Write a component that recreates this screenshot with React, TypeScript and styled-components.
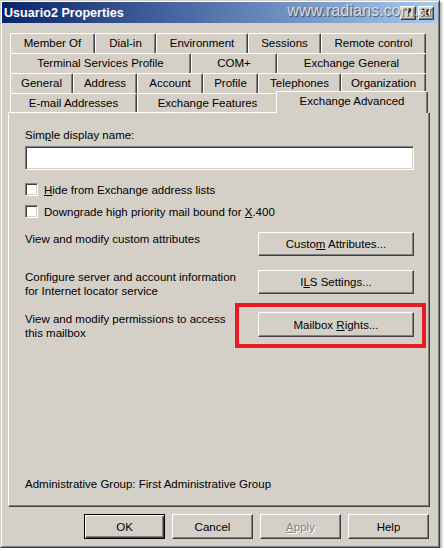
import React from 'react';
import styled, { createGlobalStyle } from 'styled-components';

const face = '#D4D0C8';
const shade = '#808080';
const dark = '#404040';

const GlobalStyle = createGlobalStyle`
	html, body {
		margin: 0;
		padding: 0;
		background: #fff;
	}
	body {
		font-family: 'Liberation Sans', Arial, sans-serif;
		font-size: 11.5px;
		line-height: 14px;
		color: #000;
	}
`;

const Window = styled.div`
	position: relative;
	box-sizing: border-box;
	width: 440px;
	height: 548px;
	background: ${face};
	border: 1px solid;
	border-color: ${face} ${dark} ${dark} ${face};
	box-shadow: 2px 2px 2px rgba(0, 0, 0, 0.3);
`;

const Frame = styled.div`
	box-sizing: border-box;
	height: 100%;
	border: 1px solid;
	border-color: #fff ${shade} ${shade} #fff;
	display: flex;
	flex-direction: column;
`;

const TitleBar = styled.div`
	height: 21px;
	display: flex;
	align-items: center;
	padding: 0 4px 0 2px;
	background: linear-gradient(to right, #0a246a, #a6caf0);
`;

const Title = styled.span`
	flex: 1;
	color: #fff;
	font-weight: bold;
	font-size: 12.6px;
	white-space: nowrap;
`;

const CaptionButtons = styled.div`
	display: flex;
	gap: 2px;
`;

const CaptionButton = styled.div`
	box-sizing: border-box;
	width: 16px;
	height: 14px;
	background: ${face};
	border: 1px solid;
	border-color: #fff ${dark} ${dark} #fff;
	box-shadow: inset -1px -1px 0 ${shade};
	display: flex;
	align-items: center;
	justify-content: center;
	font-weight: bold;
	font-size: 11px;
	line-height: 11px;
`;

const Watermark = styled.div`
	position: absolute;
	top: 1px;
	right: 6px;
	font-family: 'Liberation Sans', Arial, sans-serif;
	font-size: 16.2px;
	line-height: 16px;
	color: rgba(232, 232, 232, 0.9);
	text-shadow: 1px 1px 1px rgba(0, 0, 0, 0.55);
	pointer-events: none;
	white-space: nowrap;
`;

const Body = styled.div`
	flex: 1;
	display: flex;
	flex-direction: column;
	padding: 10px 8px 0 6px;
`;

const TabStrip = styled.div`
	display: flex;
	flex-direction: column;
	padding-left: 2px;
`;

const TabRow = styled.div`
	display: flex;
	height: 20px;
`;

const Tab = styled.div<{ $w: number; $selected?: boolean }>`
	box-sizing: border-box;
	width: ${(p) => p.$w + (p.$selected ? 4 : 0)}px;
	height: ${(p) => (p.$selected ? 22 : 20)}px;
	margin: ${(p) => (p.$selected ? '-2px 0 0 -2px' : '0')};
	position: ${(p) => (p.$selected ? 'relative' : 'static')};
	z-index: ${(p) => (p.$selected ? 2 : 'auto')};
	background: ${face};
	border-top: 1px solid #fff;
	border-left: 1px solid #fff;
	border-right: 1px solid ${dark};
	box-shadow: inset -1px 0 0 ${shade};
	border-radius: 2px 2px 0 0;
	display: flex;
	align-items: center;
	justify-content: center;
	padding-bottom: ${(p) => (p.$selected ? 3 : 1)}px;
	white-space: nowrap;
`;

const Panel = styled.div`
	position: relative;
	box-sizing: border-box;
	width: 422px;
	height: 395px;
	margin-top: -1px;
	border: 1px solid;
	border-color: #fff ${dark} ${dark} #fff;
	box-shadow: inset -1px -1px 0 ${shade};
	padding: 15px 16px 15px 16px;
	display: flex;
	flex-direction: column;
`;

const Label = styled.div`
	white-space: nowrap;
`;

const Key = styled.span`
	text-decoration: underline;
	text-underline-offset: 1px;
`;

const TextBox = styled.div`
	box-sizing: border-box;
	width: 389px;
	height: 24px;
	margin-top: 4px;
	background: #fff;
	border: 1px solid;
	border-color: ${shade} #fff #fff ${shade};
	box-shadow: inset 1px 1px 0 ${dark}, inset -1px -1px 0 ${face};
`;

const CheckRow = styled.div<{ $gap: number }>`
	display: flex;
	align-items: center;
	height: 13px;
	margin-top: ${(p) => p.$gap}px;
	gap: 6px;
`;

const CheckBox = styled.div`
	box-sizing: border-box;
	width: 13px;
	height: 13px;
	background: #fff;
	border: 1px solid;
	border-color: ${shade} #fff #fff ${shade};
	box-shadow: inset 1px 1px 0 ${dark}, inset -1px -1px 0 ${face};
`;

const ActionRow = styled.div`
	display: grid;
	grid-template-columns: 233px 156px;
	align-items: start;
	margin-top: 14px;
`;

const ButtonSlot = styled.div`
	position: relative;
`;

const Button = styled.button<{ $w?: number; $h?: number; $default?: boolean; $disabled?: boolean }>`
	box-sizing: border-box;
	width: ${(p) => p.$w ?? 156}px;
	height: ${(p) => p.$h ?? 24}px;
	padding: 0;
	margin: 0;
	background: ${face};
	font: inherit;
	color: ${(p) => (p.$disabled ? shade : '#000')};
	text-shadow: ${(p) => (p.$disabled ? '1px 1px 0 #fff' : 'none')};
	border: 1px solid;
	border-color: ${(p) => (p.$default ? '#000' : `#fff ${dark} ${dark} #fff`)};
	box-shadow: ${(p) =>
		p.$default
			? `inset 1px 1px 0 #fff, inset -1px -1px 0 ${dark}, inset -2px -2px 0 ${shade}`
			: `inset -1px -1px 0 ${shade}`};
	text-align: center;
	white-space: nowrap;
`;

const Highlight = styled.div`
	position: absolute;
	top: -9px;
	left: -23px;
	right: -12px;
	bottom: -11px;
	border: 4px solid #e61c24;
	pointer-events: none;
`;

const Footer = styled.div`
	margin-top: auto;
	white-space: nowrap;
`;

const ButtonBar = styled.div`
	display: flex;
	justify-content: flex-end;
	gap: 7px;
	margin-top: 7px;
	padding-right: 1px;
`;

interface TabDef {
	label: string;
	w: number;
	selected?: boolean;
}

const tabRows: TabDef[][] = [
	[
		{ label: 'Member Of', w: 85 },
		{ label: 'Dial-in', w: 61 },
		{ label: 'Environment', w: 92 },
		{ label: 'Sessions', w: 73 },
		{ label: 'Remote control', w: 105 },
	],
	[
		{ label: 'Terminal Services Profile', w: 181 },
		{ label: 'COM+', w: 86 },
		{ label: 'Exchange General', w: 149 },
	],
	[
		{ label: 'General', w: 63 },
		{ label: 'Address', w: 64 },
		{ label: 'Account', w: 66 },
		{ label: 'Profile', w: 55 },
		{ label: 'Telephones', w: 83 },
		{ label: 'Organization', w: 85 },
	],
	[
		{ label: 'E-mail Addresses', w: 127 },
		{ label: 'Exchange Features', w: 141 },
		{ label: 'Exchange Advanced', w: 148, selected: true },
	],
];

const CloseGlyph = () => (
	<svg width="8" height="7" viewBox="0 0 8 7">
		<path d="M0 0h2l2 2 2-2h2L5 3.5 8 7H6L4 5 2 7H0l3-3.5z" fill="#000" />
	</svg>
);

export default function App() {
	return (
		<>
			<GlobalStyle />
			<Window>
				<Frame>
					<TitleBar>
						<Title>Usuario2 Properties</Title>
						<CaptionButtons>
							<CaptionButton>?</CaptionButton>
							<CaptionButton>
								<CloseGlyph />
							</CaptionButton>
						</CaptionButtons>
					</TitleBar>
					<Body>
						<TabStrip>
							{tabRows.map((row, i) => (
								<TabRow key={i}>
									{row.map((t) => (
										<Tab key={t.label} $w={t.w} $selected={t.selected}>
											{t.label}
										</Tab>
									))}
								</TabRow>
							))}
						</TabStrip>
						<Panel>
							<Label>
								Sim<Key>p</Key>le display name:
							</Label>
							<TextBox />
							<CheckRow $gap={13}>
								<CheckBox />
								<Label>
									<Key>H</Key>ide from Exchange address lists
								</Label>
							</CheckRow>
							<CheckRow $gap={9}>
								<CheckBox />
								<Label>
									Downgrade high priority mail bound for <Key>X</Key>.400
								</Label>
							</CheckRow>
							<ActionRow>
								<Label>View and modify custom attributes</Label>
								<ButtonSlot>
									<Button>
										Custo<Key>m</Key> Attributes...
									</Button>
								</ButtonSlot>
							</ActionRow>
							<ActionRow>
								<Label>
									Configure server and account information
									<br />
									for Internet locator service
								</Label>
								<ButtonSlot>
									<Button>
										I<Key>L</Key>S Settings...
									</Button>
								</ButtonSlot>
							</ActionRow>
							<ActionRow>
								<Label>
									View and modify permissions to access
									<br />
									this mailbox
								</Label>
								<ButtonSlot>
									<Button $h={25}>
										Mailbox <Key>R</Key>ights...
									</Button>
									<Highlight />
								</ButtonSlot>
							</ActionRow>
							<Footer>Administrative Group: First Administrative Group</Footer>
						</Panel>
						<ButtonBar>
							<Button $w={81} $h={25} $default>
								OK
							</Button>
							<Button $w={81} $h={25}>
								Cancel
							</Button>
							<Button $w={81} $h={25} $disabled>
								<Key>A</Key>pply
							</Button>
							<Button $w={81} $h={25}>
								Help
							</Button>
						</ButtonBar>
					</Body>
				</Frame>
				<Watermark>www.radians.com.ar</Watermark>
			</Window>
		</>
	);
}
